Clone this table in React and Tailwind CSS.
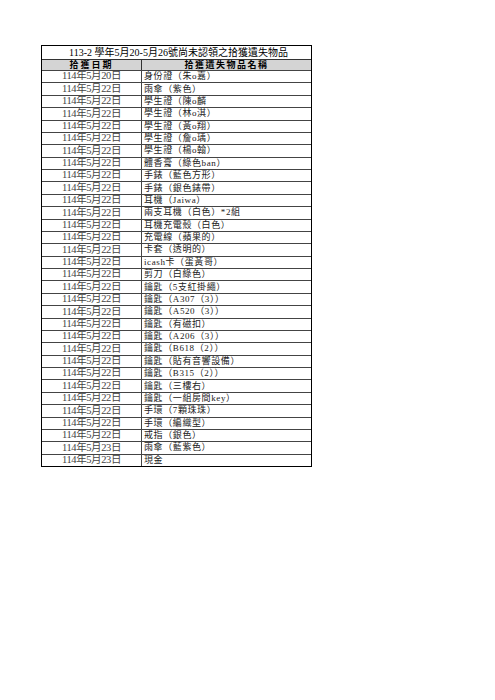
import React from 'react';

const rows = [
    ['114年5月20日', '身份證(朱o嘉)'],
    ['114年5月22日', '雨傘(紫色)'],
    ['114年5月22日', '學生證(陳o麟'],
    ['114年5月22日', '學生證(林o淇)'],
    ['114年5月22日', '學生證(黃o翔)'],
    ['114年5月22日', '學生證(詹o瑀)'],
    ['114年5月22日', '學生證(楊o翰)'],
    ['114年5月22日', '體香膏(綠色ban)'],
    ['114年5月22日', '手錶(藍色方形)'],
    ['114年5月22日', '手錶(銀色錶帶)'],
    ['114年5月22日', '耳機(Jaiwa)'],
    ['114年5月22日', '兩支耳機(白色)*2組'],
    ['114年5月22日', '耳機充電殼(白色)'],
    ['114年5月22日', '充電線(蘋果的)'],
    ['114年5月22日', '卡套(透明的)'],
    ['114年5月22日', 'icash卡(蛋黃哥)'],
    ['114年5月22日', '剪刀(白綠色)'],
    ['114年5月22日', '鑰匙(5支紅掛繩)'],
    ['114年5月22日', '鑰匙(A307(3))'],
    ['114年5月22日', '鑰匙(A520(3))'],
    ['114年5月22日', '鑰匙(有磁扣)'],
    ['114年5月22日', '鑰匙(A206(3))'],
    ['114年5月22日', '鑰匙(B618(2))'],
    ['114年5月22日', '鑰匙(貼有音響設備)'],
    ['114年5月22日', '鑰匙(B315(2))'],
    ['114年5月22日', '鑰匙(三樓右)'],
    ['114年5月22日', '鑰匙(一組房間key)'],
    ['114年5月22日', '手環(7顆珠珠)'],
    ['114年5月22日', '手環(編織型)'],
    ['114年5月22日', '戒指(銀色)'],
    ['114年5月23日', '雨傘(藍紫色)'],
    ['114年5月23日', '現金'],
];

// full-width parens like the printed sheet
const wide = (s) => s.replace(/\(/g, '（').replace(/\)/g, '）');

const App = () => {
    return (
        <div
            className="min-h-[700px] w-[495px] bg-white pt-[45px] pl-[41px]"
            style={{ fontFamily: '"Liberation Serif", "Noto Sans CJK TC", serif' }}
        >
            <div className="w-[271px] border-[1.5px] border-black text-black">
                <div className="flex h-[13px] items-center justify-center pl-[4px] text-[10px] leading-none">
                    113-2 學年5月20-5月26號尚未認領之拾獲遺失物品
                </div>
                <div className="flex h-[11px] border-t border-[#333] bg-[#d4d4d4] text-[9px] font-bold leading-none">
                    <div className="flex w-[100px] items-center justify-center border-r border-[#333] tracking-[2px]">
                        拾獲日期
                    </div>
                    <div className="flex flex-1 items-center justify-center tracking-[1.5px]">
                        拾獲遺失物品名稱
                    </div>
                </div>
                {rows.map(([date, item], i) => (
                    <div key={i} className="flex h-[12.375px] border-t border-[#444] leading-none">
                        <div className="flex w-[100px] items-center justify-center border-r border-[#444] text-[10.5px] tracking-[-0.4px] text-[#444]">
                            {date}
                        </div>
                        <div className="flex flex-1 items-center pl-[2px] text-[9px] tracking-[0.6px] text-[#222]">
                            {wide(item)}
                        </div>
                    </div>
                ))}
            </div>
        </div>
    );
};

export default App;
